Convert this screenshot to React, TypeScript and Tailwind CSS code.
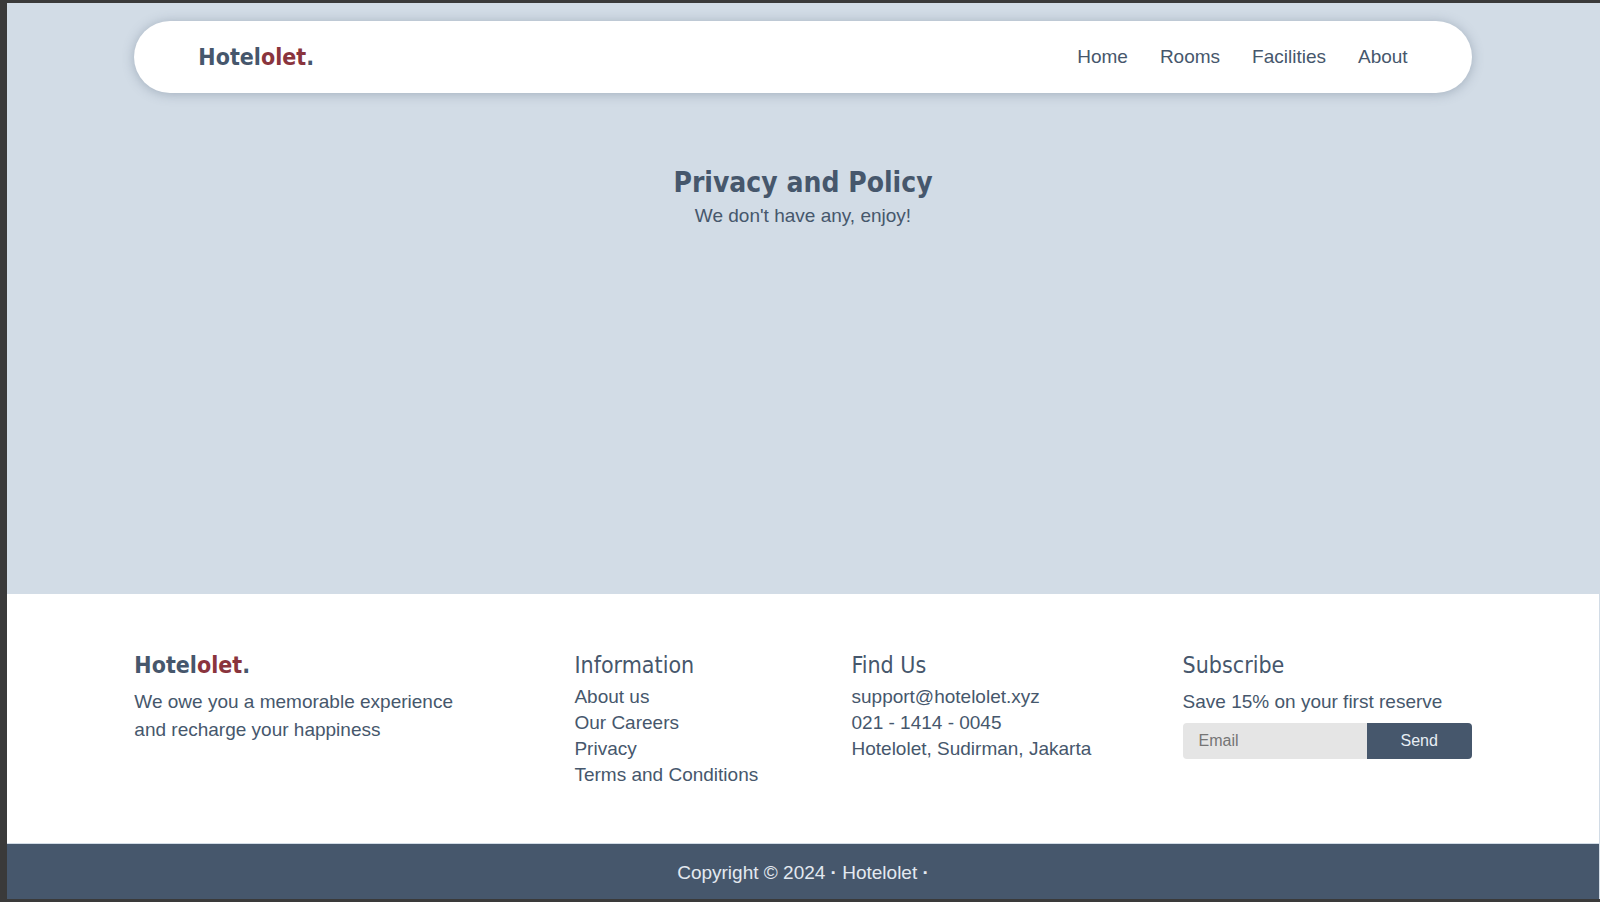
const navLinks = ["Home", "Rooms", "Facilities", "About"];
const infoLinks = ["About us", "Our Careers", "Privacy", "Terms and Conditions"];

const headingFont = "font-['DejaVu_Sans_Condensed',Tahoma,sans-serif]";

function Logo() {
  return (
    <a href="#" className={`${headingFont} block text-[23px] leading-8 font-bold`}>
      Hotel<span className="text-[#8a343d]">olet</span>.
    </a>
  );
}

function FooterTitle({ children }: { children: string }) {
  return <h2 className={`${headingFont} text-[23px] leading-8`}>{children}</h2>;
}

export default function App() {
  return (
    <div className="flex min-h-screen flex-col border-y-3 border-l-7 border-[#3a3a3a] bg-[#d2dce6] pr-px font-['Liberation_Sans',Arial,sans-serif] text-[19px] text-[#46576c]">
      <header className="mx-[8%] mt-[18px] flex h-18 items-center justify-between rounded-full bg-white px-16 shadow-[0_1px_12px_rgba(68,86,108,0.35)]">
        <Logo />
        <nav className="flex gap-8">
          {navLinks.map((label) => (
            <a key={label} href="#">
              {label}
            </a>
          ))}
        </nav>
      </header>

      <main className="flex-1 pt-[70px] text-center">
        <h1 className={`${headingFont} text-[28px] leading-10 font-bold`}>Privacy and Policy</h1>
        <p className="leading-[26px]">We don't have any, enjoy!</p>
      </main>

      <footer>
        <div className="border-b border-[#d2dce6] bg-white px-[8%] pt-[55px] pb-[55px]">
          <div className="grid grid-cols-[440fr_277fr_331fr_289fr]">
            <section>
              <Logo />
              <p className="mt-[7px] leading-7">
                We owe you a memorable experience
                <br />
                and recharge your happiness
              </p>
            </section>
            <section>
              <FooterTitle>Information</FooterTitle>
              <ul className="mt-[3px] leading-[26px]">
                {infoLinks.map((label) => (
                  <li key={label}>
                    <a href="#">{label}</a>
                  </li>
                ))}
              </ul>
            </section>
            <section>
              <FooterTitle>Find Us</FooterTitle>
              <ul className="mt-[3px] leading-[26px]">
                <li>
                  <a href="mailto:support@hotelolet.xyz">support@hotelolet.xyz</a>
                </li>
                <li>021 - 1414 - 0045</li>
                <li>Hotelolet, Sudirman, Jakarta</li>
              </ul>
            </section>
            <section className="min-w-0">
              <FooterTitle>Subscribe</FooterTitle>
              <p className="mt-[7px] leading-7">Save 15% on your first reserve</p>
              <form className="mt-[7px] flex h-9 overflow-hidden rounded text-base" onSubmit={(e) => e.preventDefault()}>
                <input
                  type="email"
                  aria-label="Email"
                  placeholder="Email"
                  className="w-0 min-w-0 flex-1 bg-[#e5e5e5] px-4 placeholder:text-[#757575]"
                />
                <button type="submit" className="w-[105px] bg-[#46576c] text-[#e8eef5]">
                  Send
                </button>
              </form>
            </section>
          </div>
        </div>
        <p className="bg-[#46576c] pt-[15px] pb-3 text-center leading-7 text-[#e3e9f0]">
          Copyright © 2024 <b>·</b> Hotelolet <b>·</b>
        </p>
      </footer>
    </div>
  );
}
